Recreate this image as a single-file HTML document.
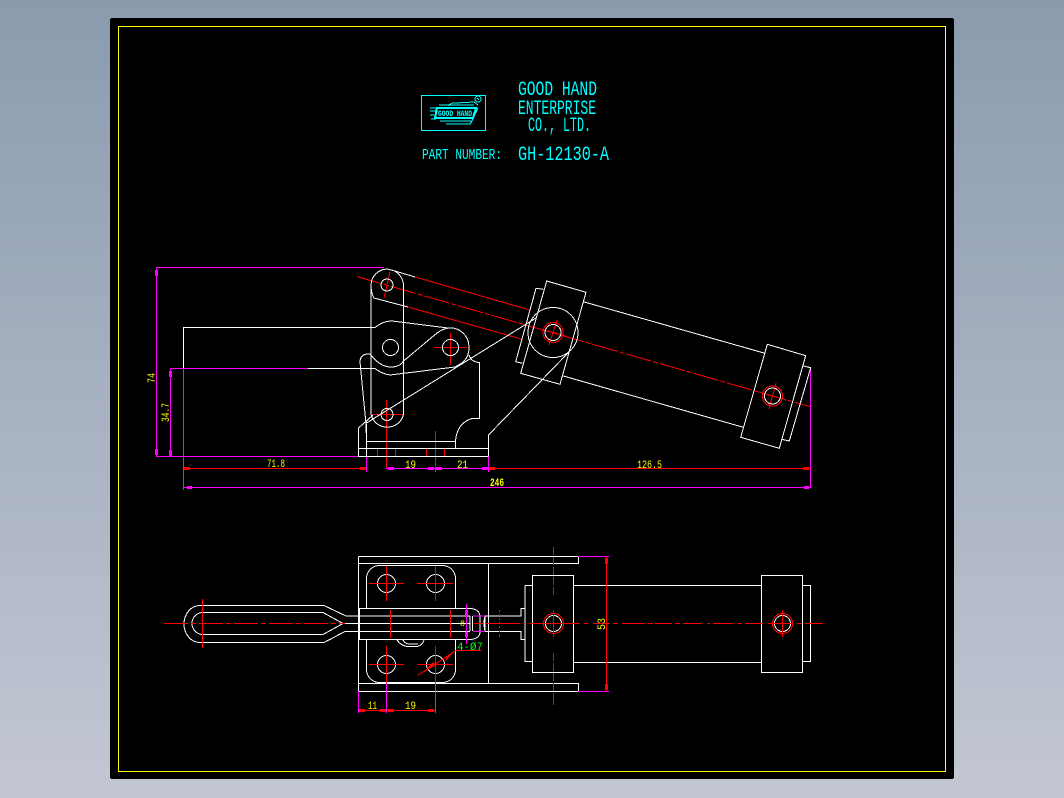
<!DOCTYPE html>
<html><head><meta charset="utf-8"><style>
html,body{margin:0;padding:0;width:1064px;height:798px;overflow:hidden;background:linear-gradient(#8a9bae,#c3c7d3)}
svg{position:absolute;left:0;top:0}
text{font-family:"Liberation Mono",monospace}
.w{fill:none;stroke:#fff;stroke-width:1}
.r{fill:none;stroke:#f00;stroke-width:1}
.m{fill:none;stroke:#f0f;stroke-width:1}
.c{fill:none;stroke:#0ff;stroke-width:1}
.y{fill:#ff0;font-size:11px}
.t{fill:#0ff}
</style></head><body>
<svg width="1064" height="798" viewBox="0 0 1064 798" xmlns="http://www.w3.org/2000/svg" shape-rendering="crispEdges">
<rect x="110" y="18" width="844" height="761" rx="2" fill="#000"/>
<rect x="118.5" y="26.5" width="827" height="745" fill="none" stroke="#ff0"/>

<!-- title -->
<rect class="c" x="421.5" y="95.5" width="64" height="35"/>
<g class="c">
<path stroke-width="2" d="M437 108H476L473 118H435Z"/>
<path d="M430 108H437 M430 111H436 M430 115H434 M431 119H436 M439 105H474 M440 121H472L478 108 M448 106Q452 102 456 103L474 102L478 105 M446 124H470L472 121"/>
<circle cx="478" cy="99" r="3"/><path d="M477 98L479 100"/>
</g>
<text x="438" y="116" font-size="8" font-weight="bold" fill="#0ff" textLength="34" lengthAdjust="spacingAndGlyphs">GOOD HAND</text>
<g class="t">
<text x="518" y="95" font-size="20" textLength="79" lengthAdjust="spacingAndGlyphs">GOOD HAND</text>
<text x="518" y="114" font-size="20" textLength="78" lengthAdjust="spacingAndGlyphs">ENTERPRISE</text>
<text x="528" y="131" font-size="20" textLength="63" lengthAdjust="spacingAndGlyphs">CO., LTD.</text>
<text x="422" y="159" font-size="15" textLength="80" lengthAdjust="spacingAndGlyphs">PART NUMBER:</text>
<text x="518" y="160" font-size="20" textLength="91" lengthAdjust="spacingAndGlyphs">GH-12130-A</text>
</g>

<!-- side view: dimensions -->
<path class="m" d="M156.5 267.5H384 M156.5 267.5V456.5 M156.5 456.5H358 M170.5 368.5H308 M170.5 368.5V456.5 M183.5 368.5V490 M183.5 487.5H810.5 M810.5 367V488 M366.5 433V472 M386.5 456V468.5H488.5 M435.5 456V472 M488.5 456V472"/>
<path class="r" d="M184 468.5H366 M489 468.5H810"/>
<g fill="#f00"><rect x="184" y="467" width="6" height="3"/><rect x="360" y="467" width="6" height="3"/><rect x="489" y="467" width="6" height="3"/><rect x="803" y="467" width="6" height="3"/></g>
<g fill="#f0f"><rect x="155" y="270" width="3" height="6"/><rect x="155" y="449" width="3" height="6"/><rect x="169" y="371" width="3" height="6"/><rect x="169" y="450" width="3" height="6"/><rect x="187" y="486" width="5" height="3"/><rect x="804" y="486" width="5" height="3"/><rect x="388" y="467" width="6" height="3"/><rect x="428" y="467" width="6" height="3"/><rect x="436" y="467" width="6" height="3"/><rect x="482" y="467" width="6" height="3"/></g>
<text class="y" x="267" y="467" textLength="18" lengthAdjust="spacingAndGlyphs">71.8</text>
<text class="y" x="405" y="468" textLength="11" lengthAdjust="spacingAndGlyphs">19</text>
<text class="y" x="457" y="468" textLength="11" lengthAdjust="spacingAndGlyphs">21</text>
<text class="y" x="637" y="468" textLength="25" lengthAdjust="spacingAndGlyphs">126.5</text>
<text class="y" x="490" y="486" font-weight="bold" textLength="14" lengthAdjust="spacingAndGlyphs">246</text>
<text class="y" transform="translate(155,383) rotate(-90)" textLength="10" lengthAdjust="spacingAndGlyphs">74</text>
<text class="y" transform="translate(169,422) rotate(-90)" textLength="19" lengthAdjust="spacingAndGlyphs">34.7</text>

<!-- red construction under white -->
<g class="r">
<path d="M415 277L530 310 M408 307L521 339"/>
<path stroke-dasharray="26 2 5 2" d="M357 276.6L810 406.7"/>
<circle cx="553" cy="332.5" r="10"/>
<circle cx="772.5" cy="396" r="10"/>
<path d="M557 320L549 345 M776 383L769 409 M540 329L566 336 M759 392L786 400"/>
<path d="M390 272L384 298"/>
<path d="M386.5 400V468 M373 414.5H404 M435.5 431V468"/>
<path d="M450.5 333V365 M434 347.5H467"/>
<path d="M377.5 448V456 M395.5 448V456 M426.5 448V456 M444.5 448V456"/>
</g>

<!-- side view: clamp -->
<g class="w">
<path d="M183.5 368V327.5H375Q383 321 392 321L448 328A19 19 0 0 1 469 347A19 19 0 0 1 462 363L455 367L390 375Q382 374 375 368.5H308"/>
<path d="M371 285V414 M403.5 285V414"/>
<path d="M371 285A16.5 16.5 0 0 1 387 269L395 271L415 277 M403.5 285A16.5 16.5 0 0 0 392 270 M371 285Q371 293 374 298L408 307"/>
<path d="M371 414A16.5 16 0 0 0 403.5 414"/>
<path d="M370 354Q380 367 391 367Q400 367 403.5 361L437 333Q444 328 450 328"/>
<path d="M370 354H366Q360 356 360 362L366 424V433"/>
<path d="M358.5 456.5V428L373 415 M366.5 423L536 318"/>
<path d="M358.5 448.5H488.5 M358.5 456.5H488.5 M488.5 456V435L568 353"/>
<path d="M366.5 441.5H455.5V448 M366.5 424V456"/>
<path d="M469 355Q471 362 479.5 362.5V418.5H472Q457 423 455.5 441"/>
<circle cx="387" cy="285" r="6"/>
<circle cx="387" cy="414.5" r="6"/>
<circle cx="390.5" cy="347.5" r="8"/>
<circle cx="450.5" cy="347.5" r="8"/>
<!-- cylinder -->
<path d="M546.7 281L586 292.3L560 384.3L520.7 373.3Z"/>
<path d="M543.3 289.3L536 288.3L515.7 361.7L522.7 363.3"/>
<path d="M583.3 301.7L765 353.3 M563.3 376L743.3 427.3"/>
<path d="M767.3 344.3L805.7 355.7L779.3 448.3L740.7 437.3Z"/>
<path d="M803.3 366L810.7 367.7L789.3 441L781.7 439.3"/>
<circle cx="553" cy="332.5" r="25"/>
<circle cx="553" cy="332.5" r="8"/>
<circle cx="772.5" cy="396" r="8"/>
</g>

<!-- top view -->
<g class="w">
<path d="M358.5 556.5H578.5V563.5H358.5 M358.5 683.5H578.5V691.5H358.5 M358.5 556.5V691.5 M488.5 563V683"/>
<path d="M366.5 608V578A13 13 0 0 1 379 565.5H443A13 13 0 0 1 455.5 578V608 M366.5 640V670A13 13 0 0 0 379 682.5H443A13 13 0 0 0 455.5 670V640"/>
<circle cx="386.5" cy="583.5" r="9"/><circle cx="435.5" cy="583.5" r="9"/>
<circle cx="386.5" cy="664.5" r="9"/><circle cx="435.5" cy="664.5" r="9"/>
<path d="M397 640Q402 647 410 646.5H417Q422 646 424 640 M403 640Q406 645 412 644H418"/>
<path d="M345 631.5L324 642.5H200A16 18.5 0 0 1 200 605.5H324L346 616"/>
<path d="M323 612.5H203A11 11 0 0 0 203 634.5H323L343 623.5Z"/>
<path d="M343 623.5H470 M346 616H470 M345 631.5H470"/>
<path d="M359.5 608.5H471.5Q480 610 480 617V632Q480 638 471.5 639.5H359.5Z"/>
<path d="M470 616V631 M472.5 616V631 M485 616V631"/>
<path d="M485 616H521V608.5H525V639.5H521V631.5H485 M485 616Q483 623 485 631"/>
<path d="M525 585.5H532.5V575.5H573.5V672.5H532.5V661.5H525V585.5 M532.5 585.5V661.5"/>
<path d="M573.5 585.5H761.5 M573.5 662.5H761.5"/>
<path d="M761.5 575.5H802.5V672.5H761.5Z M802.5 585.5H810.5V661.5H802.5"/>
<circle cx="553.5" cy="623.5" r="8"/>
<circle cx="782.5" cy="623.5" r="8"/>
</g>
<g class="r">
<path d="M164 623.5H188 M191 623.5H196 M199 623.5H223 M226 623.5H231 M234 623.5H258 M261 623.5H266 M269 623.5H293 M296 623.5H301 M304 623.5H328 M331 623.5H336 M339 623.5H345"/>
<path d="M474 623.5H483 M485 623.5H520 M523 623.5H525 M530 623.5H580 M584 623.5H588 M593 623.5H610 M613 623.5H618 M622 623.5H645 M648 623.5H653 M655 623.5H672 M675 623.5H680 M683 623.5H702 M707 623.5H710 M713 623.5H733 M737 623.5H742 M745 623.5H763 M768 623.5H793 M797 623.5H802 M805 623.5H823"/>
<path d="M202.5 599V648"/>
<path d="M369 583.5H404 M417 583.5H453 M386.5 566V601 M435.5 566V601 M369 664.5H404 M417 664.5H453 M386.5 646V683 M435.5 646V683"/>
<path d="M390.5 610V638 M450.5 610V638"/>
<path d="M499.5 610V612 M499.5 614V616 M499.5 618V620 M499.5 622V624 M499.5 626V628 M499.5 630V632 M499.5 634V637"/>
<path d="M553.5 547V555 M553.5 557V565 M553.5 567V575 M553.5 577V585 M553.5 587V595 M553.5 653V661 M553.5 663V671 M553.5 673V681 M553.5 683V691 M553.5 693V705"/>
<path d="M553.5 610V637 M782.5 610V637"/>
<circle cx="553.5" cy="623.5" r="10"/>
<circle cx="782.5" cy="623.5" r="10"/>
<path d="M606.5 556.5V691.5 M358 710.5H435 M481.5 650.5H456L417.5 675.5"/>
</g>
<g fill="#f00"><rect x="605" y="558" width="3" height="6"/><rect x="605" y="684" width="3" height="6"/><rect x="359" y="709" width="6" height="3"/><rect x="380" y="709" width="6" height="3"/><rect x="388" y="709" width="6" height="3"/><rect x="428" y="709" width="6" height="3"/>
<path d="M456 650L444 662L448 655Z M424 672L433 662L436 665Z"/></g>
<path class="m" d="M578 556.5H609 M578 691.5H609 M358.5 691V713 M386.5 683V713 M435.5 683V713 M466.5 604V644 M473 616H485 M473 631.5H485"/>
<g fill="#f0f"><rect x="465" y="610" width="3" height="5"/><rect x="465" y="632" width="3" height="5"/></g>
<text class="y" transform="translate(605,630) rotate(-90)" textLength="12" lengthAdjust="spacingAndGlyphs">53</text>
<text class="y" x="368" y="709" textLength="9" lengthAdjust="spacingAndGlyphs">11</text>
<text class="y" x="405" y="709" textLength="11" lengthAdjust="spacingAndGlyphs">19</text>
<text x="460" y="626" font-size="8" fill="#ff0" textLength="5" lengthAdjust="spacingAndGlyphs">8</text>
<text x="457" y="650" font-size="11" fill="#0f0" textLength="26" lengthAdjust="spacingAndGlyphs">4-Ø7</text>
</svg>
</body></html>
